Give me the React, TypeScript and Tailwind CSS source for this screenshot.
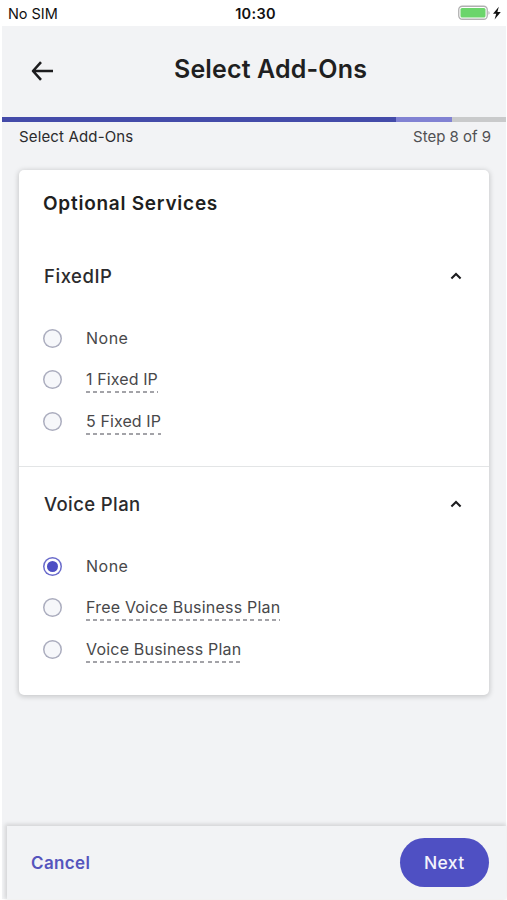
import { useState } from "react";

type Option = { label: string; detailed?: boolean; tracking: string };
type Group = { title: string; tracking: string; options: Option[] };

const groups: Group[] = [
  {
    title: "FixedIP",
    tracking: "tracking-[0.55px]",
    options: [
      { label: "None", tracking: "tracking-[0.5px]" },
      { label: "1 Fixed IP", detailed: true, tracking: "tracking-[0.1px]" },
      { label: "5 Fixed IP", detailed: true, tracking: "tracking-[0.1px]" },
    ],
  },
  {
    title: "Voice Plan",
    tracking: "tracking-[0.4px]",
    options: [
      { label: "None", tracking: "tracking-[0.5px]" },
      { label: "Free Voice Business Plan", detailed: true, tracking: "tracking-[0.2px]" },
      { label: "Voice Business Plan", detailed: true, tracking: "tracking-[0.2px]" },
    ],
  },
];

function StatusBar() {
  return (
    <div className="grid h-[26px] grid-cols-3 items-center bg-white pl-2 pr-[5px] pt-px text-[14.5px] text-[#111]">
      <span className="tracking-[-0.05px]">No SIM</span>
      <span className="pl-[1px] text-center font-semibold tracking-[0.3px]">10:30</span>
      <svg className="mt-[-1px] justify-self-end" width="44" height="16" viewBox="0 0 44 16">
        <rect x="0.75" y="1.25" width="28.5" height="13" rx="3.5" fill="#fff" stroke="#b0b0b0" strokeWidth="1.3" />
        <rect x="2.5" y="3" width="25" height="9.5" rx="1.5" fill="#6bd56b" />
        <path d="M30.5 6v3.8c1.4-.6 1.4-3.2 0-3.8z" fill="#aaa" />
        <path d="M40.8 1.8 35 8.8h3.2l-1.6 5.6 6.2-7.4h-3.4z" fill="#111" />
      </svg>
    </div>
  );
}

function Chevron({ open }: { open: boolean }) {
  return (
    <svg className={open ? "" : "rotate-180"} width="12" height="8" viewBox="0 0 12 8" fill="none">
      <path d="M1.4 6.4 6 2l4.6 4.4" stroke="#1c1c1e" strokeWidth="2.1" />
    </svg>
  );
}

function Radio({ checked }: { checked: boolean }) {
  return (
    <span
      className={`mt-[2px] flex size-[19px] shrink-0 items-center justify-center rounded-full ${
        checked
          ? "bg-white shadow-[inset_0_0_0_1.5px_#6a6bcb]"
          : "bg-[#f6f7fa] shadow-[inset_0_0_0_1.5px_#abadbe]"
      }`}
    >
      {checked && <span className="size-[11px] rounded-full bg-[#4e4fc4]" />}
    </span>
  );
}

function OptionGroup({ group }: { group: Group }) {
  const [open, setOpen] = useState(true);
  const [selected, setSelected] = useState(group.title === "Voice Plan" ? 0 : -1);
  return (
    <section>
      <button
        className="flex h-6 w-full items-center justify-between pl-[25px] pr-[27px]"
        onClick={() => setOpen(!open)}
      >
        <span className={`text-[18.5px] font-medium leading-6 text-[#2b2b2d] ${group.tracking}`}>
          {group.title}
        </span>
        <Chevron open={open} />
      </button>
      {open && (
        <div className="pt-[39px]">
          {group.options.map((option, i) => (
            <button
              key={option.label}
              className={`flex w-full items-start pl-6 text-left ${i === 0 ? "h-[41px]" : "h-[42px]"}`}
              onClick={() => setSelected(i)}
            >
              <Radio checked={selected === i} />
              <span className="ml-6 flex flex-col text-[16px] leading-[23px] text-[#48484a]">
                <span className={option.tracking}>{option.label}</span>
                {option.detailed && (
                  <span className="h-[1.5px] bg-[repeating-linear-gradient(90deg,#a3a3a8_0_4px,transparent_4px_7.15px)]" />
                )}
              </span>
            </button>
          ))}
        </div>
      )}
    </section>
  );
}

export default function App() {
  return (
    <div className="flex h-[900px] w-[507px] flex-col overflow-hidden bg-white font-['Inter',sans-serif] text-[#1f1f21]">
      <StatusBar />
      <div className="ml-[2px] mr-[1px] flex h-[873px] flex-col bg-[#f2f3f5]">
        <header className="grid h-[91px] shrink-0 grid-cols-[109px_1fr_76px] items-center">
          <button className="mt-[-1px] pl-7" aria-label="Back">
            <svg width="25" height="22" viewBox="0 0 25 22" fill="none">
              <path d="M23 11H3M11 2.2 3 11l8 8.8" stroke="#1c1c1e" strokeWidth="2.6" strokeLinejoin="round" />
            </svg>
          </button>
          <h1 className="mt-[-5px] text-center text-[25px] font-semibold leading-8 tracking-[0.15px]">
            Select Add-Ons
          </h1>
        </header>
        <div className="flex h-[5px] shrink-0 bg-[#c9cacb]">
          <div className="w-[394px] bg-[#444ba9]" />
          <div className="w-[56px] bg-[#8182d3]" />
        </div>
        <div className="flex h-[48px] shrink-0 justify-between pl-[17px] pr-[15px] pt-1 text-[15px] leading-[22px]">
          <span className="tracking-[0.15px] text-[#2b2b2d]">Select Add-Ons</span>
          <span className="tracking-[-0.02px] text-[#505053]">Step 8 of 9</span>
        </div>
        <main className="mx-[17px] h-[525px] shrink-0 rounded-[5px] bg-white shadow-[0_1px_5px_1px_rgba(0,0,0,0.17)]">
          <h2 className="pl-6 pt-[22px] text-[19px] font-semibold leading-6 tracking-[0.75px]">Optional Services</h2>
          <div className="mt-12">
            <OptionGroup group={groups[0]} />
          </div>
          <div className="mb-[25px] mt-[14px] border-t-[1.5px] border-[#e3e5e6]" />
          <OptionGroup group={groups[1]} />
        </main>
        <footer className="ml-[5px] mt-auto flex h-[73px] shrink-0 items-center justify-between bg-[#f2f3f5] pl-6 pr-[17.5px] shadow-[-1px_-1px_4px_1px_rgba(0,0,0,0.13)]">
          <button className="pt-[2px] text-[17px] font-semibold tracking-[0.35px] text-[#5555bd]">Cancel</button>
          <button className="h-[49px] w-[88.5px] rounded-full bg-[#4f50c3] pt-[2px] text-[17.5px] font-medium tracking-[0.3px] text-[#f3f3fc]">
            Next
          </button>
        </footer>
      </div>
    </div>
  );
}
